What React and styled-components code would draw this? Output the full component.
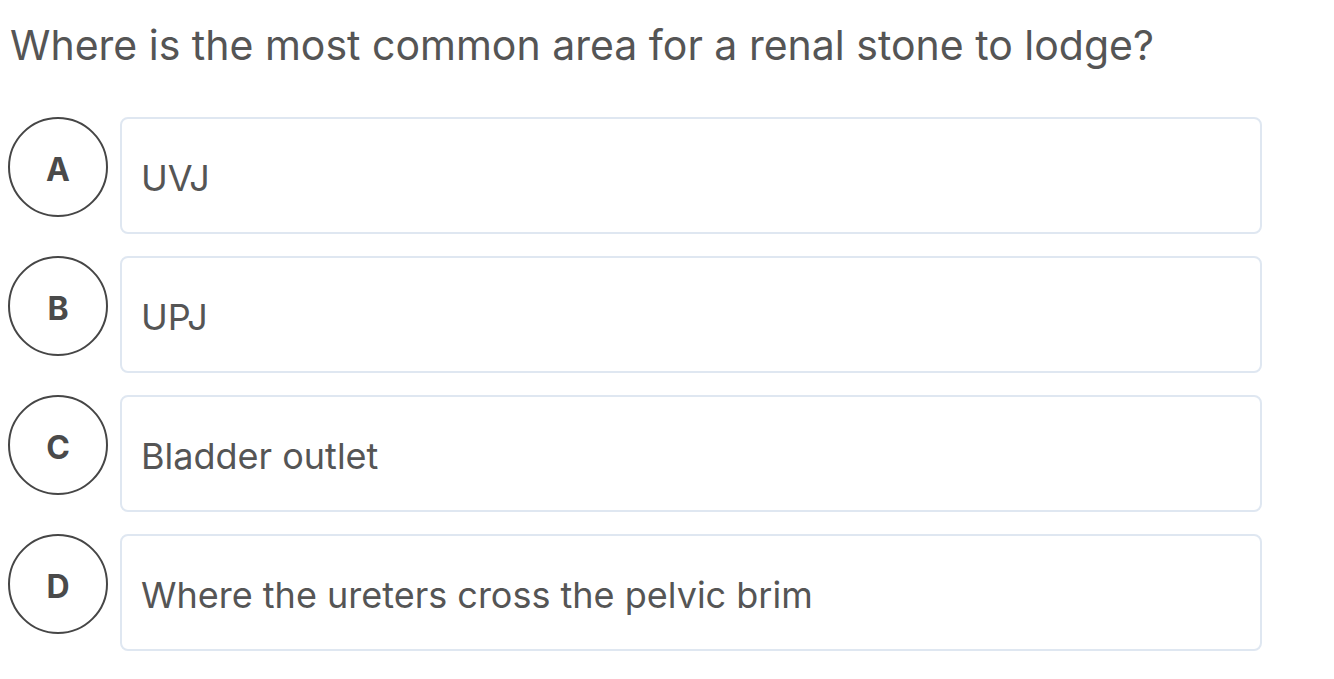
import React from "react";
import styled, { createGlobalStyle } from "styled-components";

const GlobalStyle = createGlobalStyle`
  body {
    margin: 0;
    background: #fff;
    font-family: Inter, "Open Sans", Arial, sans-serif;
  }
`;

const Page = styled.div`
  width: 1254px;
  padding: 19px 8px 0 8px;
`;

const Question = styled.h1`
  margin: 0 0 45px 2px;
  font-size: 41px;
  font-weight: 400;
  line-height: 1.3;
  color: #555;
`;

const Options = styled.div`
  display: flex;
  flex-direction: column;
  gap: 22px;
`;

const Row = styled.div`
  display: flex;
  align-items: flex-start;
  gap: 12px;
`;

const Letter = styled.div`
  flex: 0 0 auto;
  width: 100px;
  height: 100px;
  box-sizing: border-box;
  border: 2px solid #464646;
  border-radius: 50%;
  display: flex;
  align-items: center;
  justify-content: center;
  font-size: 32px;
  font-weight: 700;
  color: #4a4a4a;
  padding-top: 4px;
`;

const Card = styled.div`
  flex: 1;
  height: 117px;
  box-sizing: border-box;
  border: 2px solid #dfe7f1;
  border-radius: 8px;
  display: flex;
  align-items: center;
  padding-left: 19px;
  padding-top: 4px;
  font-size: 36px;
  color: #555;
`;

const options = [
  { key: "A", text: "UVJ" },
  { key: "B", text: "UPJ" },
  { key: "C", text: "Bladder outlet" },
  { key: "D", text: "Where the ureters cross the pelvic brim" },
];

export default function App() {
  return (
    <>
      <GlobalStyle />
      <Page>
        <Question>Where is the most common area for a renal stone to lodge?</Question>
        <Options>
          {options.map((o) => (
            <Row key={o.key}>
              <Letter>{o.key}</Letter>
              <Card>{o.text}</Card>
            </Row>
          ))}
        </Options>
      </Page>
    </>
  );
}
